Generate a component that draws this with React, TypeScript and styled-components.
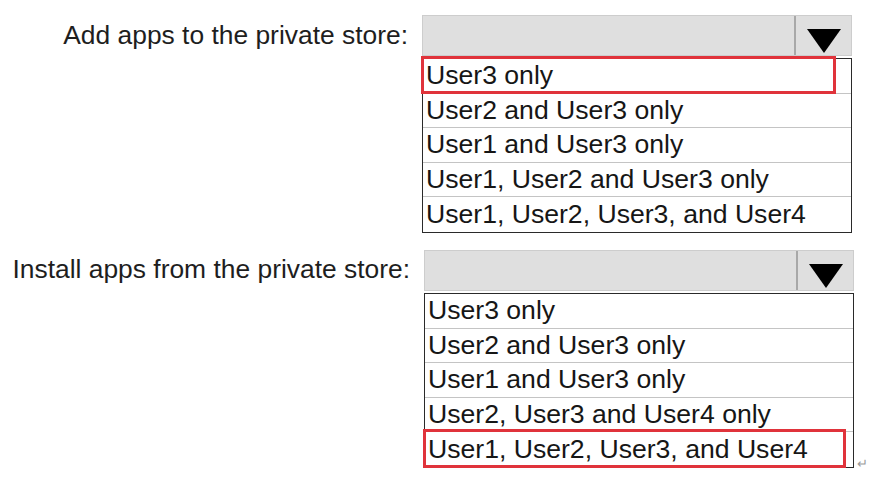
import { FC } from "react"
import styled, { createGlobalStyle } from "styled-components"

const GlobalStyle = createGlobalStyle`
  body {
    margin: 0;
    background: #ffffff;
    font-family: "Liberation Sans", Arial, sans-serif;
    color: #1c1c1c;
  }
`

const Page = styled.div`
  display: flex;
  flex-direction: column;
  gap: 17px;
  padding-top: 15px;
`

const QuestionRow = styled.div<{ $shift: number }>`
  display: grid;
  grid-template-columns: 408px 430px auto;
  column-gap: 14px;
  align-items: start;
  padding-left: ${p => p.$shift}px;
`

const Label = styled.div`
  height: 40px;
  display: flex;
  align-items: center;
  justify-content: flex-end;
  font-size: 26.4px;
  color: #1e1e1e;
  white-space: nowrap;
`

const Dropdown = styled.div`
  display: flex;
  flex-direction: column;
  gap: 2px;
`

const Header = styled.div`
  height: 41px;
  display: flex;
  background: #dfdfdf;
  border: 1px solid #cdcdcd;
  box-sizing: border-box;
`

const HeaderField = styled.div`
  flex: 1;
`

const ArrowButton = styled.div`
  width: 57px;
  border-left: 2px solid #a8a8a8;
  display: flex;
  justify-content: center;
  align-items: flex-end;
  padding-bottom: 2px;
  box-sizing: border-box;
`

const List = styled.div`
  border: 1.5px solid #2a2a2a;
  background: #fff;
`

const Option = styled.div`
  position: relative;
  height: 34.6px;
  display: flex;
  align-items: center;
  padding-left: 3px;
  font-size: 26.6px;
  color: #161616;
  white-space: nowrap;
  border-bottom: 1px solid #c4c4c4;
  box-sizing: border-box;

  &:last-child {
    border-bottom: none;
  }
`

const Highlight = styled.div<{ $width: number }>`
  position: absolute;
  left: -2px;
  top: -3px;
  bottom: -1px;
  width: ${p => p.$width}px;
  border: 3px solid #e0333b;
  box-sizing: border-box;
  pointer-events: none;
`

const ReturnMark = styled.div`
  align-self: end;
  margin-left: -11px;
  margin-bottom: -3px;
  font-size: 13px;
  color: #9a9a9a;
`

type Question = {
  label: string
  options: string[]
  answer: number
  highlightWidth: number
  shift: number
  mark?: boolean
}

const questions: Question[] = [
  {
    label: "Add apps to the private store:",
    options: [
      "User3 only",
      "User2 and User3 only",
      "User1 and User3 only",
      "User1, User2 and User3 only",
      "User1, User2, User3, and User4",
    ],
    answer: 0,
    highlightWidth: 415,
    shift: 0,
  },
  {
    label: "Install apps from the private store:",
    options: [
      "User3 only",
      "User2 and User3 only",
      "User1 and User3 only",
      "User2, User3 and User4 only",
      "User1, User2, User3, and User4",
    ],
    answer: 4,
    highlightWidth: 423,
    shift: 2,
    mark: true,
  },
]

const Arrow: FC = () => (
  <svg width="34" height="24" viewBox="0 0 34 24">
    <polygon points="0,0 34,0 17,24" fill="#000" />
  </svg>
)

const Select: FC<{ q: Question }> = ({ q }) => (
  <QuestionRow $shift={q.shift}>
    <Label>{q.label}</Label>
    <Dropdown>
      <Header>
        <HeaderField />
        <ArrowButton>
          <Arrow />
        </ArrowButton>
      </Header>
      <List>
        {q.options.map((opt, index) => (
          <Option key={index}>
            {opt}
            {index === q.answer && <Highlight $width={q.highlightWidth} />}
          </Option>
        ))}
      </List>
    </Dropdown>
    {q.mark ? <ReturnMark>↵</ReturnMark> : <span />}
  </QuestionRow>
)

const App: FC = () => {
  return (
    <>
      <GlobalStyle />
      <Page>
        {questions.map((q, index) => (
          <Select key={index} q={q} />
        ))}
      </Page>
    </>
  )
}

export default App
